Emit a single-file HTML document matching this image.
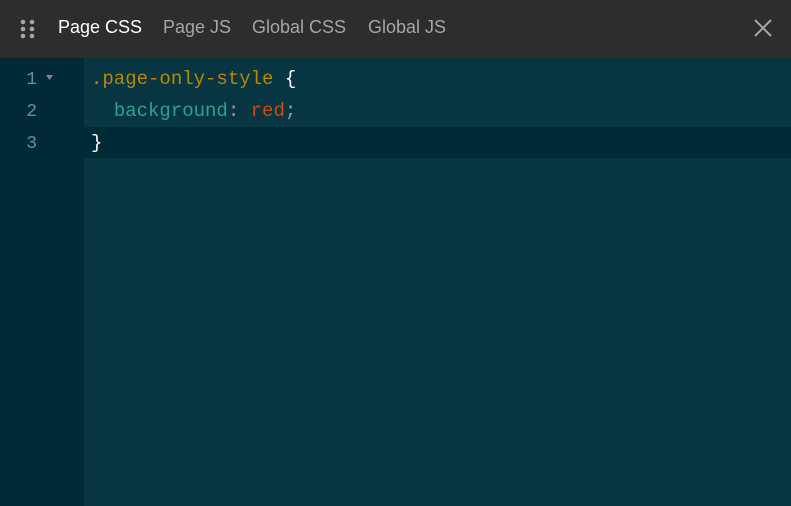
<!DOCTYPE html>
<html><head><style>
body{margin:0;width:791px;height:506px;overflow:hidden;background:#073642;font-family:"Liberation Sans",Arial,sans-serif;position:relative}
.hdr{position:absolute;left:0;top:0;width:791px;height:58px;background:#2d2d2d}
.tab{position:absolute;top:17px;font-size:18px;color:#a6a6a6}
.gut{position:absolute;left:0;top:58px;width:84px;height:448px;background:#002b36}
.hl{position:absolute;left:84px;top:127px;width:707px;height:31px;background:#002b36}
.ln{position:absolute;left:0;width:37px;text-align:right;font-family:"Liberation Mono",monospace;font-size:18px;color:#7a8a8e}
.code{position:absolute;left:91px;font-family:"Liberation Mono",monospace;font-size:19px;white-space:pre}
</style></head><body>
<div class="hdr">
<svg style="position:absolute;left:20px;top:19px" width="16" height="20"><g fill="#a6a6a6"><circle cx="3" cy="3" r="2.3"/><circle cx="12" cy="3" r="2.3"/><circle cx="3" cy="10" r="2.3"/><circle cx="12" cy="10" r="2.3"/><circle cx="3" cy="17" r="2.3"/><circle cx="12" cy="17" r="2.3"/></g></svg>
<div class="tab" style="left:58px;color:#fff">Page CSS</div>
<div class="tab" style="left:163px">Page JS</div>
<div class="tab" style="left:252px">Global CSS</div>
<div class="tab" style="left:368px">Global JS</div>
<svg style="position:absolute;left:754px;top:19px" width="18" height="18"><path d="M1 1L17 17M17 1L1 17" stroke="#a6a6a6" stroke-width="2"/></svg>
</div>
<div class="gut"></div>
<div class="hl"></div>
<div class="ln" style="top:70px">1</div>
<svg style="position:absolute;left:46px;top:75px" width="8" height="6"><path d="M0 0H7L3.5 5Z" fill="#7a8a8e"/></svg>
<div class="ln" style="top:102px">2</div>
<div class="ln" style="top:134px">3</div>
<div class="code" style="top:68px"><span style="color:#b58900">.page-only-style</span> <span style="color:#fff">{</span></div>
<div class="code" style="top:100px">  <span style="color:#2aa198">background</span><span style="color:#93a1a1">:</span> <span style="color:#cb4b16">red</span><span style="color:#93a1a1">;</span></div>
<div class="code" style="top:132px;color:#fff">}</div>
</body></html>
